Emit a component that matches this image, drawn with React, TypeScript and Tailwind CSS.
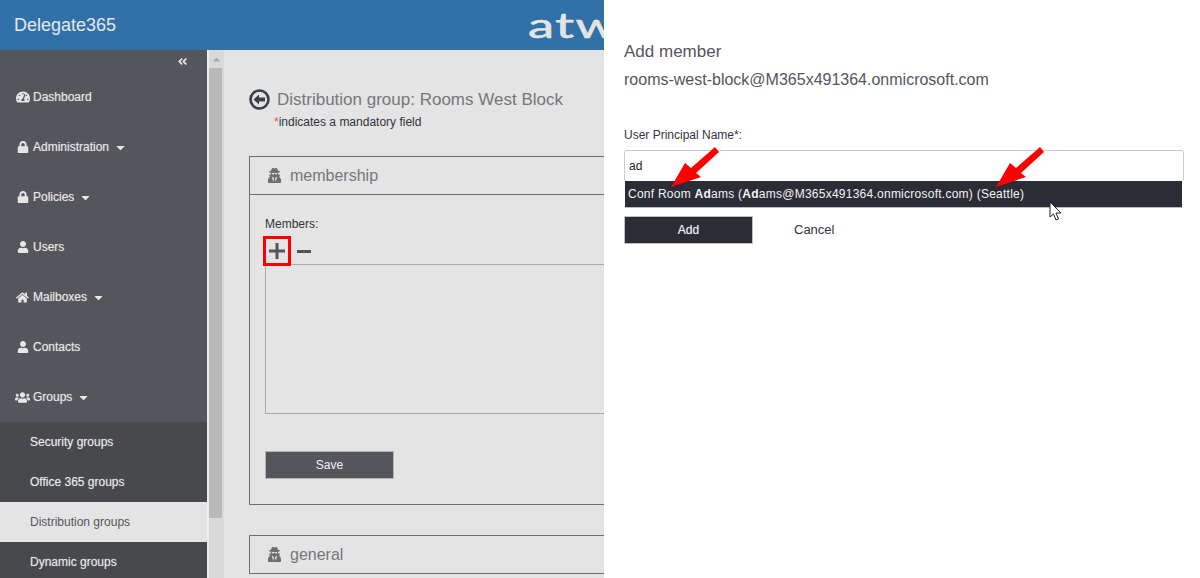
import React from "react";
import { FaTachometerAlt, FaLock, FaUser, FaHome, FaUsers, FaUserSecret, FaAngleDoubleLeft, FaCaretDown, FaCaretUp } from "react-icons/fa";

const shadow = "[text-shadow:0_0_1px_rgba(255,255,255,0.45)]";

function NavRow({ icon, label, caret }: { icon: React.ReactNode; label: string; caret?: boolean }) {
  return (
    <div className="h-[50px] shrink-0 flex items-center pl-[14px] text-[12px] text-[#e6e6e6]">
      <span className="w-[17px] flex justify-center">{icon}</span>
      <span className={`ml-[2px] ${shadow}`}>{label}</span>
      {caret && <FaCaretDown className="ml-[5px] text-[13px]" />}
    </div>
  );
}

function SubRow({ label, active }: { label: string; active?: boolean }) {
  return (
    <div className={`h-[40px] shrink-0 flex items-center pl-[30px] text-[12px] ${active ? "bg-[#e4e4e4] text-[#55565b]" : `text-[#e6e6e6] ${shadow}`}`}>
      {label}
    </div>
  );
}

function Arrow() {
  return (
    <svg width="52" height="44" viewBox="0 0 52 44" className="block">
      <polygon points="2,42 16,18 22,23 46,2 50,7 27,28 32,32" fill="#fe0000" />
    </svg>
  );
}

export default function App() {
  return (
    <div className="relative w-[1200px] h-[578px] overflow-hidden bg-[#e4e4e4] font-['Liberation_Sans',Arial,sans-serif]">
      <header className="h-[50px] bg-[#3270a8] flex items-center pl-[14px]">
        <span className="text-[18px] text-[#e4e8ec] w-[514px]">Delegate365</span>
        <span className="font-['Lato',sans-serif] text-[35px] leading-none text-[#e4e4e4] tracking-[1px] scale-x-[1.5] origin-left -mt-[1px] [-webkit-text-stroke:0.6px_#e4e4e4]">atw</span>
      </header>
      <div className="flex h-[528px]">
        <aside className="w-[207px] shrink-0 bg-[#55565b] flex flex-col overflow-hidden">
          <div className="h-[22px] shrink-0 flex justify-end items-center pr-[19px] text-[#e6e6e6]">
            <FaAngleDoubleLeft className="text-[11px]" />
          </div>
          <NavRow icon={<FaTachometerAlt className="text-[14px]" />} label="Dashboard" />
          <NavRow icon={<FaLock className="text-[12px]" />} label="Administration" caret />
          <NavRow icon={<FaLock className="text-[12px]" />} label="Policies" caret />
          <NavRow icon={<FaUser className="text-[12px]" />} label="Users" />
          <NavRow icon={<FaHome className="text-[13px]" />} label="Mailboxes" caret />
          <NavRow icon={<FaUser className="text-[12px]" />} label="Contacts" />
          <NavRow icon={<FaUsers className="text-[15px]" />} label="Groups" caret />
          <div className="bg-[#48494d] flex flex-col">
            <SubRow label="Security groups" />
            <SubRow label="Office 365 groups" />
            <SubRow label="Distribution groups" active />
            <SubRow label="Dynamic groups" />
          </div>
        </aside>
        <div className="w-[17px] shrink-0 bg-[#d9d9d9] border-l-2 border-[#eeeeee] flex flex-col items-center">
          <div className="h-[18px] flex items-center justify-center text-[#a8a8a8]"><FaCaretUp className="text-[11px]" /></div>
          <div className="w-[13px] h-[450px] bg-[#b9b9b9] mr-[2px]" />
        </div>
        <main className="flex-1 pl-[25px] pt-[39px] text-[#55565b]">
          <div className="flex items-center h-[20px]">
            <svg width="21" height="21" viewBox="0 0 21 21" className="shrink-0">
              <circle cx="10.5" cy="10.5" r="9" fill="none" stroke="#3a3f4b" strokeWidth="2.6" />
              <polygon points="4.5,10.5 10,5.5 10,8.5 16,8.5 16,12.5 10,12.5 10,15.5" fill="#3a3f4b" />
            </svg>
            <span className="ml-[7px] mt-[2px] text-[17px] text-[#76777c]">Distribution group: Rooms West Block</span>
          </div>
          <div className="mt-[6px] ml-[25px] text-[12px] text-[#33333d] leading-[14px]">
            <span className="text-[#e05050]">*</span>indicates a mandatory field
          </div>
          <section className="mt-[27px] w-[500px] h-[349px] border border-[#6d6e75]">
            <div className="h-[38px] border-b border-[#6d6e75] flex items-center pl-[17px]">
              <FaUserSecret className="text-[15px] text-[#6d6e72]" />
              <span className="ml-[8px] text-[16px] text-[#76777c]">membership</span>
            </div>
            <div className="pl-[15px] pt-[22px]">
              <div className="text-[12px] text-[#33333d] leading-[14px]">Members:</div>
              <div className="flex items-center mt-[5px] -ml-[2px] h-[30px]">
                <div className="w-[28px] h-[30px] border-[3px] border-[#fe0000] flex items-center justify-center">
                  <svg width="16" height="16" viewBox="0 0 16 16"><path d="M6.5 0h3v6.5H16v3H9.5V16h-3V9.5H0v-3h6.5z" fill="#55565b" /></svg>
                </div>
                <svg width="14" height="3" viewBox="0 0 14 3" className="ml-[6px]"><rect width="14" height="3" fill="#55565b" /></svg>
              </div>
              <div className="-mt-[2px] w-[400px] h-[150px] border border-[#a8a8a8]" />
              <button className="mt-[37px] block w-[129px] h-[28px] bg-[#55565b] border border-[#b4b4b4] text-[12px] text-[#f0f0f0]">Save</button>
            </div>
          </section>
          <section className="mt-[30px] w-[500px] h-[39px] border border-[#6d6e75] flex items-center pl-[17px]">
            <FaUserSecret className="text-[15px] text-[#6d6e72]" />
            <span className="ml-[8px] text-[16px] text-[#76777c]">general</span>
          </section>
        </main>
      </div>

      {/* slide-over panel */}
      <div className="absolute left-[604px] top-0 w-[596px] h-[578px] bg-white pl-[20px] pr-[16px] pt-[42px] text-[#55565b]">
        <div className="text-[17px] leading-[20px]">Add member</div>
        <div className="mt-[8px] text-[16px] leading-[20px]">rooms-west-block@M365x491364.onmicrosoft.com</div>
        <label className="block mt-[38px] text-[12px] leading-[14px] text-[#33333d]">User Principal Name*:</label>
        <div className="mt-[8px] h-[32px] border border-[#cccccc] rounded-[3px] flex items-center pl-[4px] text-[12px] text-[#222]">ad</div>
        <div className="ml-[1px] mr-[2px] h-[27px] bg-[#2a2d35] border-b border-[#bbb] flex items-center pl-[3px] text-[12px] tracking-[0.25px] text-[#f2f2f2] -mt-[1px]">
          <span>Conf Room <b>Ad</b>ams (<b>Ad</b>ams@M365x491364.onmicrosoft.com) (Seattle)</span>
        </div>
        <div className="flex items-center mt-[8px]">
          <button className={`w-[129px] h-[28px] bg-[#2a2d35] border border-[#c0c0c0] text-[12px] text-[#f0f0f0] ${shadow}`}>Add</button>
          <span className="ml-[41px] text-[13px] text-[#33333d]">Cancel</span>
        </div>
      </div>

      <div className="absolute left-[669px] top-[145px]"><Arrow /></div>
      <div className="absolute left-[994px] top-[145px]"><Arrow /></div>
      <svg className="absolute left-[1049px] top-[201px]" width="14" height="21" viewBox="0 0 14 21">
        <path d="M1 1 L1 16 L4.5 13 L7 19 L9.5 18 L7 12 L12 12 Z" fill="#fff" stroke="#222" strokeWidth="1" />
      </svg>
    </div>
  );
}
